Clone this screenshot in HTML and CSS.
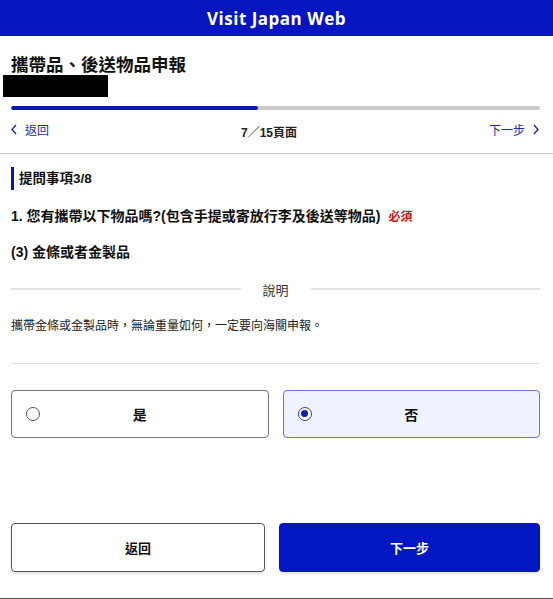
FILE: index.html
```html
<!DOCTYPE html>
<html lang="zh-Hant">
<head>
<meta charset="utf-8">
<title>Visit Japan Web</title>
<link rel="stylesheet" href="styles.css">
</head>
<body>
<header class="topbar">Visit Japan Web</header>
<div class="page">
  <div class="wrap">
    <h1 class="title">攜帶品、後送物品申報</h1>
    <div class="redact"></div>
    <div class="progress"><div class="progress-fill" style="width:46.6%"></div></div>
    <nav class="stepnav">
      <a class="navlink"><svg class="chev" viewBox="0 0 6 11" width="6" height="11"><path d="M5 1 L1 5.5 L5 10" fill="none" stroke="currentColor" stroke-width="1.4"/></svg>返回</a>
      <span class="pager">7／15頁面</span>
      <a class="navlink next">下一步<svg class="chev" viewBox="0 0 6 11" width="6" height="11"><path d="M1 1 L5 5.5 L1 10" fill="none" stroke="currentColor" stroke-width="1.4"/></svg></a>
    </nav>
  </div>
  <div class="rule-full"></div>
  <div class="wrap">
    <h2 class="section">提問事項3/8</h2>
    <p class="question">1. 您有攜帶以下物品嗎?(包含手提或寄放行李及後送等物品)<span class="req">必須</span></p>
    <p class="item">(3) 金條或者金製品</p>
    <div class="explain"><span class="explain-line"></span><span class="explain-text">說明</span><span class="explain-line"></span></div>
    <p class="desc">攜帶金條或金製品時，無論重量如何，一定要向海關申報。</p>
    <div class="rule"></div>
    <div class="choices">
      <label class="choice"><span class="radio"></span><span class="choice-text">是</span></label>
      <label class="choice selected"><span class="radio on"></span><span class="choice-text">否</span></label>
    </div>
    <div class="actions">
      <button class="btn back">返回</button>
      <button class="btn primary">下一步</button>
    </div>
  </div>
  <div class="bottom-line"></div>
</div>
</body>
</html>
```
FILE: styles.css
```css
* { box-sizing: border-box; }
html, body { margin: 0; padding: 0; background: #fff; }
body {
  font-family: "Liberation Sans", "Noto Sans CJK TC", sans-serif;
  color: #111;
  width: 553px;
  overflow: hidden;
}
.topbar {
  height: 36px;
  background: #0516c0;
  color: #fff;
  font-family: "Open Sans", "Noto Sans", sans-serif;
  font-weight: 700;
  font-size: 17px;
  letter-spacing: 0.5px;
  display: flex;
  align-items: center;
  justify-content: center;
}
.wrap { padding: 0 13px 0 11px; }
.title {
  margin: 19px 0 0 0;
  font-size: 17.5px;
  line-height: 20px;
  font-weight: 700;
}
.redact {
  width: 105px;
  height: 22px;
  background: #000;
  margin-left: -8px;
}
.progress {
  margin-top: 9px;
  height: 4px;
  border-radius: 2px;
  background: #c9c9c9;
  overflow: hidden;
}
.progress-fill { height: 100%; background: #0a17b0; border-radius: 2px; }
.stepnav {
  margin-top: 8px;
  height: 22px;
  display: flex;
  align-items: center;
  justify-content: space-between;
  font-size: 12px;
}
.navlink {
  color: #1a2ab0;
  display: flex;
  align-items: center;
  gap: 8px;
}
.navlink.next { margin-right: 1px; }
.chev { display: block; }
.pager { font-weight: 700; color: #222; margin-top: 4px; }
.rule-full { height: 1px; background: #cfcfcf; margin-top: 13px; }
.section {
  margin: 13px 0 0 0;
  border-left: 3px solid #0516b0;
  padding-left: 5px;
  height: 23px;
  line-height: 23px;
  font-size: 13.5px;
  font-weight: 700;
}
.question {
  margin: 16px 0 0 0;
  font-size: 14px;
  line-height: 20px;
  font-weight: 700;
}
.req {
  color: #d40f0f;
  font-size: 12px;
  margin-left: 8px;
}
.item {
  margin: 15px 0 0 0;
  font-size: 14px;
  line-height: 20px;
  font-weight: 700;
}
.explain {
  margin-top: 17px;
  height: 20px;
  display: flex;
  align-items: center;
  gap: 0;
}
.explain-line { flex: 1; height: 2px; background: #e3e3e3; }
.explain-text {
  width: 70px;
  text-align: center;
  font-size: 13px;
  color: #333;
}
.desc {
  margin: 18px 0 0 0;
  font-size: 12px;
  line-height: 18px;
  color: #222;
}
.rule { height: 1px; background: #e0e0e0; margin-top: 28px; }
.choices {
  margin-top: 26px;
  display: grid;
  grid-template-columns: 1fr 1fr;
  gap: 14px;
}
.choice {
  position: relative;
  height: 48px;
  border: 1px solid #777;
  border-radius: 4px;
  display: flex;
  align-items: center;
  justify-content: center;
  background: #fff;
}
.choice.selected {
  border-color: #6b72d4;
  background: #eff3fd;
}
.radio {
  position: absolute;
  left: 14px;
  top: 50%;
  transform: translateY(-50%);
  width: 14px;
  height: 14px;
  border-radius: 50%;
  border: 1px solid #555;
  background: #fff;
}
.radio.on {
  border: 1.5px solid #2b3ac8;
  background: #fff;
}
.radio.on::after {
  content: "";
  position: absolute;
  left: 2px;
  top: 2px;
  width: 7px;
  height: 7px;
  border-radius: 50%;
  background: #0b1ec2;
}
.choice-text { font-size: 14px; font-weight: 700; }
.actions {
  margin-top: 85px;
  display: grid;
  grid-template-columns: 254px 1fr;
  gap: 14px;
}
.btn {
  height: 49px;
  border-radius: 4px;
  font-family: "Liberation Sans", "Noto Sans CJK TC", sans-serif;
  font-size: 13px;
  font-weight: 700;
  box-shadow: 0 2px 3px rgba(0,0,0,0.12);
}
.btn.back { background: #fff; border: 1px solid #555; color: #111; }
.btn.primary { background: #0216c2; border: 1px solid #0216c2; color: #fff; }
.bottom-line { margin-top: 26px; height: 2px; background: #555; }
```
